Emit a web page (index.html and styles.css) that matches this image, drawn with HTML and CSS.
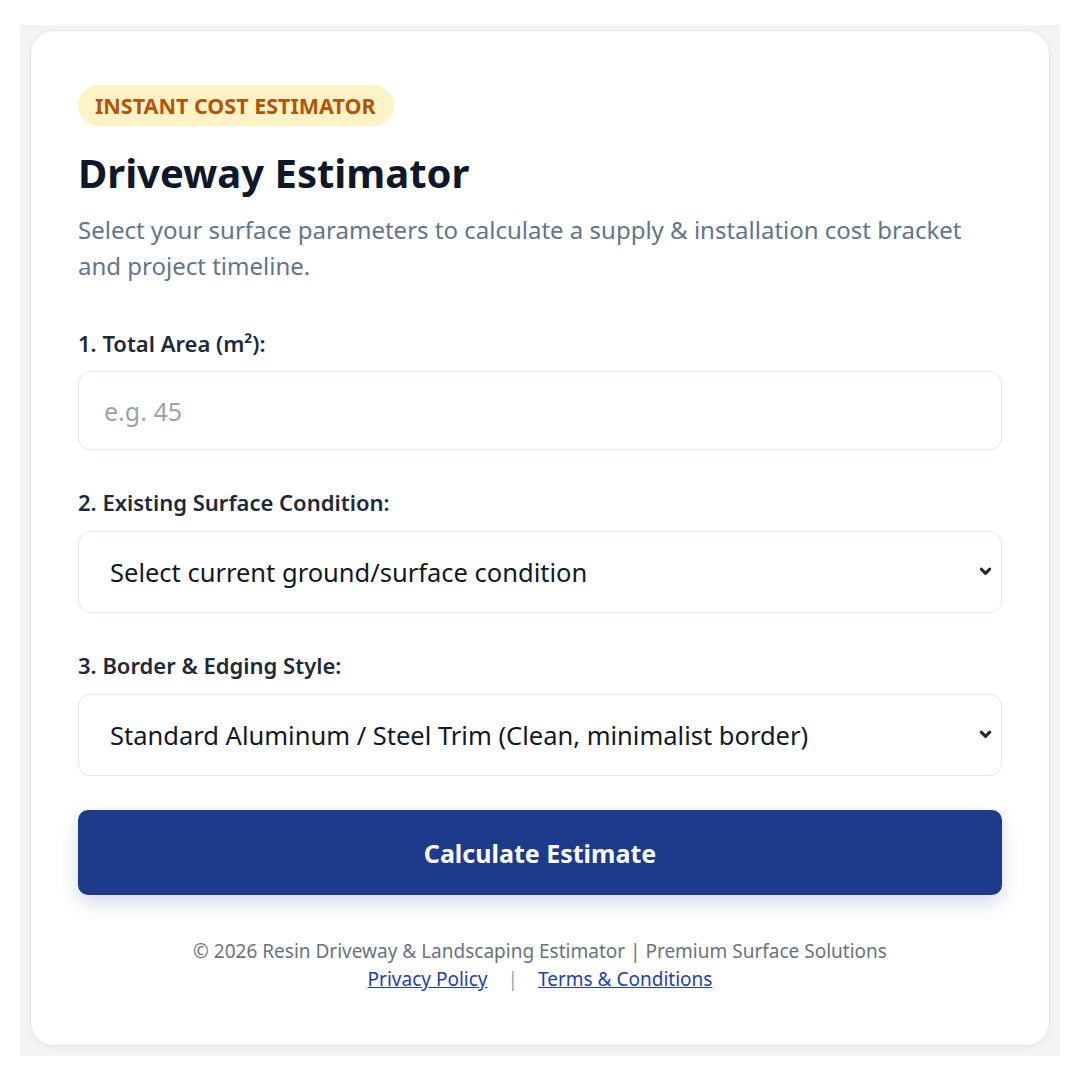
FILE: index.html
```html
<!DOCTYPE html>
<html lang="en">
<head>
  <meta charset="UTF-8">
  <meta name="viewport" content="width=device-width, initial-scale=1.0">
  <title>Driveway Estimator</title>
  <link rel="stylesheet" href="styles.css">
</head>
<body>
  <div class="page">
    <div class="card">
      <span class="badge">Instant Cost Estimator</span>
      <h1>Driveway Estimator</h1>
      <p class="intro">Select your surface parameters to calculate a supply &amp; installation cost bracket and project timeline.</p>

      <div class="field first">
        <label for="area">1. Total Area (m²):</label>
        <input type="number" id="area" placeholder="e.g. 45">
      </div>

      <div class="field">
        <label for="condition">2. Existing Surface Condition:</label>
        <div class="select-wrap">
          <select id="condition">
            <option>Select current ground/surface condition</option>
          </select>
          <svg class="chevron" viewBox="0 0 16 16" width="15" height="15">
            <path d="M3.5 5.5 L8 10 L12.5 5.5" fill="none" stroke="#1f2937" stroke-width="3.2" stroke-linecap="round" stroke-linejoin="round"/>
          </svg>
        </div>
      </div>

      <div class="field">
        <label for="border">3. Border &amp; Edging Style:</label>
        <div class="select-wrap">
          <select id="border">
            <option>Standard Aluminum / Steel Trim (Clean, minimalist border)</option>
          </select>
          <svg class="chevron" viewBox="0 0 16 16" width="15" height="15">
            <path d="M3.5 5.5 L8 10 L12.5 5.5" fill="none" stroke="#1f2937" stroke-width="3.2" stroke-linecap="round" stroke-linejoin="round"/>
          </svg>
        </div>
      </div>

      <button class="calc-btn">Calculate Estimate</button>

      <footer class="footer">
        <div>© 2026 Resin Driveway &amp; Landscaping Estimator | Premium Surface Solutions</div>
        <div><a href="#">Privacy Policy</a><span class="sep">|</span><a href="#">Terms &amp; Conditions</a></div>
      </footer>
    </div>
  </div>
</body>
</html>
```

FILE: styles.css
```css
html, body {
  margin: 0;
  background: #ffffff;
}
body {
  font-family: "Noto Sans", "Open Sans", sans-serif;
  padding: 25px 20px;
}
.page {
  background: #f3f4f6;
  padding: 5px 10px 10px;
}
.card {
  background: #ffffff;
  border: 1px solid #e5e7eb;
  border-radius: 24px;
  padding: 54px 47px 52px;
  box-shadow: 0 2px 6px rgba(15, 23, 42, 0.04);
}
.badge {
  display: inline-block;
  background: #fef3c7;
  color: #b45309;
  font-size: 21.5px;
  font-weight: 700;
  text-transform: uppercase;
  padding: 6px 18px 6px 17px;
  line-height: 29px;
  border-radius: 999px;
}
h1 {
  margin: 19px 0 0;
  font-size: 40px;
  line-height: 56px;
  font-weight: 700;
  color: #0f172a;
}
.intro {
  margin: 11px 0 0;
  font-size: 24px;
  line-height: 36px;
  color: #64748b;
}
.field {
  margin-top: 38px;
}
.field.first {
  margin-top: 45px;
}
label {
  display: block;
  font-size: 22px;
  font-weight: 600;
  color: #1e293b;
  line-height: 28px;
  margin-bottom: 15px;
}
.field.first label {
  margin-bottom: 14px;
}
input, select {
  display: block;
  width: 100%;
  box-sizing: border-box;
  border: 1.5px solid #e2e8f0;
  border-radius: 12px;
  background: #ffffff;
  font-family: inherit;
  outline: none;
}
input {
  height: 79px;
  padding: 0 25px;
  font-size: 25px;
  color: #111827;
}
input::placeholder {
  color: #9ca3af;
}
.select-wrap {
  position: relative;
}
select {
  appearance: none;
  -webkit-appearance: none;
  height: 82px;
  padding: 0 60px 0 31px;
  font-size: 25.5px;
  color: #111827;
}
.chevron {
  position: absolute;
  right: 9px;
  top: 33px;
  pointer-events: none;
}
.calc-btn {
  display: block;
  width: 100%;
  height: 85px;
  margin-top: 34px;
  border: none;
  border-radius: 10px;
  background: #1e3a8a;
  color: #ffffff;
  font-family: inherit;
  font-size: 25px;
  font-weight: 700;
  cursor: pointer;
  box-shadow: 0 8px 18px rgba(30, 58, 138, 0.18);
}
.footer {
  margin-top: 42px;
  text-align: center;
  font-size: 19px;
  line-height: 28px;
  color: #6b7280;
}
.footer a {
  color: #1e40af;
  text-decoration: underline;
}
.sep {
  margin: 0 20px;
  color: #9ca3af;
}
```
